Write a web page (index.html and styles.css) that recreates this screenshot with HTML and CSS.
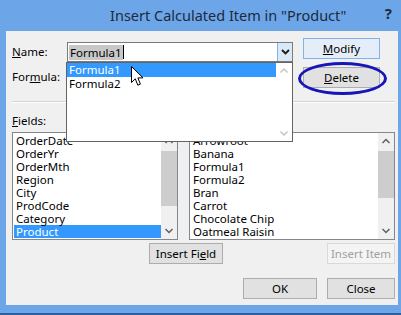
FILE: index.html
```html
<!DOCTYPE html>
<html>
<head>
<meta charset="utf-8">
<link rel="stylesheet" href="styles.css">
</head>
<body>
<div class="window">
  <div class="titlebar">
    <span class="title">Insert Calculated Item in "Product"</span>
    <span class="help">?</span>
  </div>
  <div class="panel">
    <div class="top">
      <div class="form">
        <div class="row">
          <span class="lbl"><u>N</u>ame:</span>
          <div class="combo">
            <div class="combo-field"><span class="sel">Formula1</span><span class="caret"></span></div>
            <div class="combo-btn">
              <svg width="9" height="6" viewBox="0 0 9 6"><path d="M1 1 L4.5 4.5 L8 1" fill="none" stroke="#1a1a1a" stroke-width="1.8"/></svg>
            </div>
            <div class="dropdown">
              <div class="dd-items">
                <div class="dd-item active">Formula1</div>
                <div class="dd-item">Formula2</div>
              </div>
              <div class="sbar sbar-off">
                <svg class="arr" width="16" height="16" viewBox="0 0 16 16"><path d="M4.5 9.5 L8 6 L11.5 9.5" fill="none" stroke="#c4c4c4" stroke-width="1.5"/></svg>
                <div class="sbar-space"></div>
                <svg class="arr" width="16" height="16" viewBox="0 0 16 16"><path d="M4.5 6.5 L8 10 L11.5 6.5" fill="none" stroke="#c4c4c4" stroke-width="1.5"/></svg>
              </div>
            </div>
            <svg class="cursor" width="13" height="21" viewBox="0 0 13 21"><path d="M0.5 0.5 L0.5 16.5 L4.3 12.8 L6.8 19.2 L9.4 18.1 L6.9 11.9 L12 11.9 Z" fill="#fff" stroke="#000" stroke-width="1" stroke-linejoin="round"/></svg>
          </div>
        </div>
        <div class="row">
          <span class="lbl">For<u>m</u>ula:</span>
          <div class="formula-field"></div>
        </div>
      </div>
      <div class="side">
        <button class="btn modify"><u>M</u>odify</button>
        <div class="delete-wrap">
          <button class="btn"><u>D</u>elete</button>
          <div class="ring"></div>
        </div>
      </div>
    </div>
    <div class="sep"></div>
    <div class="labels">
      <span class="lbl fields-lbl"><u>F</u>ields:</span>
    </div>
    <div class="lists">
      <div class="listbox fields">
        <div class="items">
          <div class="item">OrderDate</div>
          <div class="item">OrderYr</div>
          <div class="item">OrderMth</div>
          <div class="item">Region</div>
          <div class="item">City</div>
          <div class="item">ProdCode</div>
          <div class="item">Category</div>
          <div class="item selected">Product</div>
        </div>
        <div class="sbar">
          <svg class="arr" width="16" height="17" viewBox="0 0 16 17"><path d="M4.5 10 L8 6.5 L11.5 10" fill="none" stroke="#606060" stroke-width="1.5"/></svg>
          <div class="track"><div class="thumb t1"></div></div>
          <svg class="arr" width="16" height="17" viewBox="0 0 16 17"><path d="M4.5 7 L8 10.5 L11.5 7" fill="none" stroke="#606060" stroke-width="1.5"/></svg>
        </div>
      </div>
      <div class="listbox itemsbox">
        <div class="items">
          <div class="item">Arrowroot</div>
          <div class="item">Banana</div>
          <div class="item">Formula1</div>
          <div class="item">Formula2</div>
          <div class="item">Bran</div>
          <div class="item">Carrot</div>
          <div class="item">Chocolate Chip</div>
          <div class="item">Oatmeal Raisin</div>
        </div>
        <div class="sbar">
          <svg class="arr" width="16" height="17" viewBox="0 0 16 17"><path d="M4.5 10 L8 6.5 L11.5 10" fill="none" stroke="#606060" stroke-width="1.5"/></svg>
          <div class="track"><div class="thumb t2"></div></div>
          <svg class="arr" width="16" height="17" viewBox="0 0 16 17"><path d="M4.5 7 L8 10.5 L11.5 7" fill="none" stroke="#606060" stroke-width="1.5"/></svg>
        </div>
      </div>
    </div>
    <div class="insert-row">
      <button class="btn insert-field">Insert Fi<u>e</u>ld</button>
      <button class="btn insert-item" disabled>Insert Item</button>
    </div>
    <div class="footer">
      <button class="btn ok">OK</button>
      <button class="btn close">Close</button>
    </div>
  </div>
</div>
</body>
</html>
```

FILE: styles.css
```css
* { box-sizing: border-box; }
html, body { margin: 0; padding: 0; }
body {
  width: 401px;
  height: 315px;
  overflow: hidden;
  font-family: "Noto Sans", "Open Sans", sans-serif;
  font-size: 11.5px;
  color: #000;
}
u { text-decoration: underline; text-underline-offset: 1px; }

.window {
  width: 401px;
  height: 315px;
  background: #6ca6e9;
  display: flex;
  flex-direction: column;
  border-bottom: 2px solid #2d5e9e;
}
.titlebar {
  height: 31px;
  display: flex;
  align-items: center;
}
.title {
  margin-left: 110px;
  font-size: 14.5px;
  color: #1e2a3a;
  padding-bottom: 1px;
}
.help {
  margin-left: auto;
  margin-right: 9px;
  font-weight: bold;
  font-size: 15px;
  color: #1e2a3a;
  margin-top: -5px;
}
.panel {
  margin: 0 3px 0 6px;
  height: 274px;
  background: #f0f0f0;
  padding: 7px 3px 0 6px;
  display: flex;
  flex-direction: column;
}

.top { display: flex; }
.form { width: 281px; padding-top: 4px; display: flex; flex-direction: column; gap: 5px; }
.row { display: flex; align-items: center; height: 20px; }
.lbl { width: 55px; line-height: 14px; }

.combo { position: relative; width: 226px; height: 20px; }
.combo-field {
  height: 20px;
  border: 1px solid #7a7a7a;
  background: #fff;
  display: flex;
  align-items: center;
  padding-left: 1px;
  padding-right: 16px;
}
.sel { background: #c8c8c8; padding: 0 1px; line-height: 15px; }
.caret { width: 1px; height: 14px; background: #000; }
.combo-btn {
  position: absolute;
  right: 1px; top: 1px; bottom: 1px;
  width: 15px;
  background: #dbe8f7;
  border-left: 1px solid #7eb4ea;
  display: flex; align-items: center; justify-content: center;
}
.dropdown {
  position: absolute;
  left: -1px; top: 20px;
  width: 227px; height: 80px;
  background: #fff;
  border: 1px solid #646464;
  display: flex;
  z-index: 5;
}
.dd-items { flex: 1; }
.dd-item { height: 14px; line-height: 14px; padding-left: 2px; }
.dd-item.active { background: #3399ff; color: #fff; }
.cursor { position: absolute; left: 64px; top: 24px; z-index: 6; }

.formula-field {
  width: 226px; height: 20px;
  border: 1px solid #abadb3;
  background: #fff;
}

.side { margin-left: 10px; display: flex; flex-direction: column; gap: 8px; }
.btn {
  font-family: inherit;
  font-size: 11.5px;
  color: #000;
  background: #e1e1e1;
  border: 1px solid #adadad;
  height: 21px;
  padding: 0;
  margin: 0;
  line-height: 18px;
}
.side .btn { width: 77px; }
.modify { border-color: #7eb4ea; background: #e5eef8; }
.delete-wrap { position: relative; }
.ring {
  position: absolute;
  left: -5px; top: -5px;
  width: 89px; height: 33px;
  border: 3px solid #1515b8;
  border-radius: 50%;
}

.sep {
  margin-top: 13px;
  height: 2px;
  border-top: 1px solid #d5d5d5;
  border-bottom: 1px solid #fff;
}
.labels { display: flex; margin-top: 11px; height: 16px; }
.fields-lbl { width: 183px; }

.lists { display: flex; gap: 11px; margin-top: 2px; }
.listbox {
  height: 108px;
  border: 1px solid #828790;
  background: #fff;
  display: flex;
}
.fields { width: 166px; }
.itemsbox { width: 206px; }
.items { flex: 1; padding-top: 1px; padding-left: 1px; overflow: hidden; }
.item { height: 13px; line-height: 13px; padding-left: 2px; white-space: nowrap; }
.item.selected { background: #3399ff; color: #fff; }
.sbar { width: 16px; background: #f0f0f0; display: flex; flex-direction: column; }
.dropdown .sbar { background: #fff; }
.arr { display: block; flex: none; }
.sbar-space { flex: 1; }
.track { flex: 1; position: relative; }
.thumb { position: absolute; left: 0; right: 0; background: #cdcdcd; }
.t1 { top: 1px; height: 55px; }
.t2 { top: 1px; height: 47px; }

.insert-row { display: flex; margin-top: 3px; }
.insert-field { width: 74px; margin-left: 137px; }
.insert-item { width: 68px; margin-left: auto; color: #a0a0a0; background: #f4f4f4; border-color: #d9d9d9; }
.footer { display: flex; justify-content: flex-end; gap: 10px; margin-top: 14px; }
.ok { width: 74px; height: 21px; }
.close { width: 68px; height: 21px; }
```
